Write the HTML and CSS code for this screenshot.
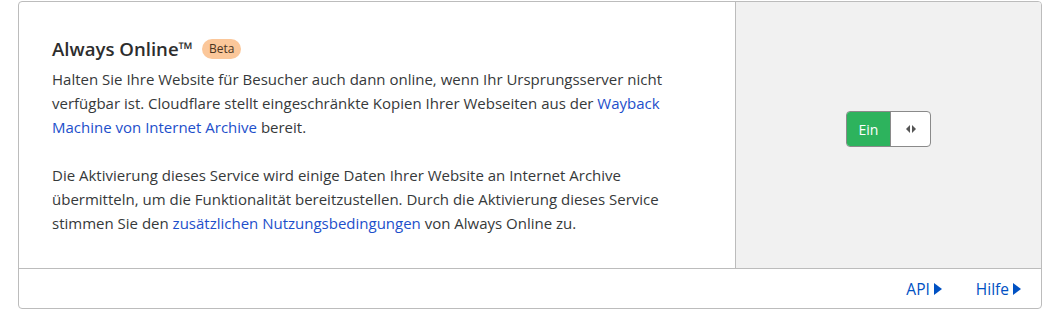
FILE: index.html
```html
<!DOCTYPE html>
<html lang="de">
<head>
<meta charset="utf-8">
<link rel="stylesheet" href="styles.css">
</head>
<body>
<div class="card">
  <div class="card-main">
    <div class="content">
      <h3 class="title">Always Online™ <span class="badge">Beta</span></h3>
      <p>Halten Sie Ihre Website für Besucher auch dann online, wenn Ihr Ursprungsserver nicht verfügbar ist. Cloudflare stellt eingeschränkte Kopien Ihrer Webseiten aus der <a href="#">Wayback Machine von Internet Archive</a> bereit.</p>
      <p>Die Aktivierung dieses Service wird einige Daten Ihrer Website an Internet Archive übermitteln, um die Funktionalität bereitzustellen. Durch die Aktivierung dieses Service stimmen Sie den <a href="#">zusätzlichen Nutzungsbedingungen</a> von Always Online zu.</p>
    </div>
    <div class="control">
      <div class="toggle">
        <span class="toggle-on">Ein</span>
        <span class="toggle-knob">
          <svg width="10" height="8" viewBox="0 0 10 8"><path d="M4 0 L0 4 L4 8 Z" fill="#555"/><path d="M6 0 L10 4 L6 8 Z" fill="#555"/></svg>
        </span>
      </div>
    </div>
  </div>
  <div class="card-footer">
    <a href="#" class="foot-link">API <span class="tri"></span></a>
    <a href="#" class="foot-link">Hilfe <span class="tri"></span></a>
  </div>
</div>
</body>
</html>
```
FILE: styles.css
```css
* { box-sizing: border-box; }
html, body { margin: 0; padding: 0; background: #fff; }
body {
  font-family: "Segoe UI", "Open Sans", "Noto Sans", sans-serif;
  color: #36393a;
  font-size: 15px;
}
.card {
  margin: 1px 14px 0 18px;
  border: 1px solid #bcbcbc;
  border-radius: 4px;
  overflow: hidden;
}
.card-main {
  display: flex;
  border-bottom: 1px solid #bcbcbc;
  height: 267px;
}
.content {
  width: 717px;
  padding: 35px 33px 0 33px;
  border-right: 1px solid #bcbcbc;
}
.title {
  margin: 0 0 6px 0;
  font-size: 18.6px;
  font-weight: 600;
  color: #2d2d2d;
  display: flex;
  align-items: center;
  line-height: 24px;
}
.badge {
  display: inline-block;
  margin-left: 9px;
  background: #fbc79a;
  color: #4a3320;
  font-size: 12px;
  font-weight: 400;
  line-height: 20px;
  padding: 0 7px;
  border-radius: 10px;
}
p {
  margin: 0 0 24px 0;
  line-height: 24px;
  max-width: 628px;
}
a { color: #1d4fcb; text-decoration: none; }
.control {
  flex: 1;
  background: #f1f1f1;
  display: flex;
  align-items: center;
  justify-content: center;
  padding-bottom: 12px;
}
.toggle {
  display: flex;
  height: 36px;
  width: 85px;
  border: 1px solid #8a8a8a;
  border-radius: 4px;
  overflow: hidden;
  background: #fff;
}
.toggle-on {
  width: 44px;
  background: #2db35d;
  color: #fff;
  font-size: 14px;
  display: flex;
  align-items: center;
  justify-content: center;
  border-right: 1px solid #8a8a8a;
}
.toggle-knob {
  flex: 1;
  display: flex;
  align-items: center;
  justify-content: center;
}
.card-footer {
  height: 39px;
  display: flex;
  justify-content: flex-end;
  align-items: center;
  padding-right: 20px;
  gap: 34px;
}
.foot-link {
  color: #0051c3;
  font-size: 15.5px;
  display: flex;
  align-items: center;
  gap: 4px;
}
.tri {
  width: 0; height: 0;
  border-top: 6px solid transparent;
  border-bottom: 6px solid transparent;
  border-left: 8px solid #0051c3;
}
```
